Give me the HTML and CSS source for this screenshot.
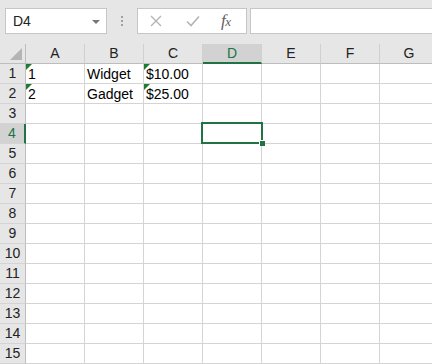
FILE: index.html
```
<!DOCTYPE html>
<html>
<head>
<meta charset="utf-8">
<link rel="stylesheet" href="styles.css">
</head>
<body>
<div class="app">
  <div class="toolbar">
    <div class="namebox">
      <span class="name">D4</span>
      <span class="caret"></span>
    </div>
    <div class="grip"><i></i><i></i><i></i></div>
    <div class="fbuttons">
      <svg class="ico cancel" width="12" height="12" viewBox="0 0 12 12"><path d="M1 1 L11 11 M11 1 L1 11" stroke="#b4b4b4" stroke-width="1.4" fill="none"/></svg>
      <svg class="ico enter" width="14" height="12" viewBox="0 0 14 12"><path d="M1 6.5 L5 10.5 L13 1.5" stroke="#b4b4b4" stroke-width="1.6" fill="none"/></svg>
      <span class="fx">f<span class="fxx">x</span></span>
    </div>
    <div class="formula"></div>
  </div>
  <div class="sheet">
    <div class="row hdr">
      <div class="rh corner"><span class="tri"></span></div>
      <div class="ch">A</div>
      <div class="ch">B</div>
      <div class="ch">C</div>
      <div class="ch active">D</div>
      <div class="ch">E</div>
      <div class="ch">F</div>
      <div class="ch">G</div>
    </div>
    <div class="row"><div class="rh">1</div><div class="c err">1</div><div class="c">Widget</div><div class="c err">$10.00</div><div class="c"></div><div class="c"></div><div class="c"></div><div class="c"></div></div>
    <div class="row"><div class="rh">2</div><div class="c err">2</div><div class="c">Gadget</div><div class="c err">$25.00</div><div class="c"></div><div class="c"></div><div class="c"></div><div class="c"></div></div>
    <div class="row"><div class="rh">3</div><div class="c"></div><div class="c"></div><div class="c"></div><div class="c"></div><div class="c"></div><div class="c"></div><div class="c"></div></div>
    <div class="row"><div class="rh active">4</div><div class="c"></div><div class="c"></div><div class="c"></div><div class="c"></div><div class="c"></div><div class="c"></div><div class="c"></div></div>
    <div class="row"><div class="rh">5</div><div class="c"></div><div class="c"></div><div class="c"></div><div class="c"></div><div class="c"></div><div class="c"></div><div class="c"></div></div>
    <div class="row"><div class="rh">6</div><div class="c"></div><div class="c"></div><div class="c"></div><div class="c"></div><div class="c"></div><div class="c"></div><div class="c"></div></div>
    <div class="row"><div class="rh">7</div><div class="c"></div><div class="c"></div><div class="c"></div><div class="c"></div><div class="c"></div><div class="c"></div><div class="c"></div></div>
    <div class="row"><div class="rh">8</div><div class="c"></div><div class="c"></div><div class="c"></div><div class="c"></div><div class="c"></div><div class="c"></div><div class="c"></div></div>
    <div class="row"><div class="rh">9</div><div class="c"></div><div class="c"></div><div class="c"></div><div class="c"></div><div class="c"></div><div class="c"></div><div class="c"></div></div>
    <div class="row"><div class="rh">10</div><div class="c"></div><div class="c"></div><div class="c"></div><div class="c"></div><div class="c"></div><div class="c"></div><div class="c"></div></div>
    <div class="row"><div class="rh">11</div><div class="c"></div><div class="c"></div><div class="c"></div><div class="c"></div><div class="c"></div><div class="c"></div><div class="c"></div></div>
    <div class="row"><div class="rh">12</div><div class="c"></div><div class="c"></div><div class="c"></div><div class="c"></div><div class="c"></div><div class="c"></div><div class="c"></div></div>
    <div class="row"><div class="rh">13</div><div class="c"></div><div class="c"></div><div class="c"></div><div class="c"></div><div class="c"></div><div class="c"></div><div class="c"></div></div>
    <div class="row"><div class="rh">14</div><div class="c"></div><div class="c"></div><div class="c"></div><div class="c"></div><div class="c"></div><div class="c"></div><div class="c"></div></div>
    <div class="row"><div class="rh">15</div><div class="c"></div><div class="c"></div><div class="c"></div><div class="c"></div><div class="c"></div><div class="c"></div><div class="c"></div></div>
    <div class="selection"><span class="handle"></span></div>
  </div>
</div>
</body>
</html>
```
FILE: styles.css
```
html, body {
  margin: 0;
  padding: 0;
  background: #ffffff;
  overflow: hidden;
}
body {
  width: 432px;
  height: 364px;
  font-family: "Liberation Sans", Arial, sans-serif;
}
.app {
  width: 432px;
  height: 364px;
  overflow: hidden;
}
.toolbar {
  height: 44px;
  background: #e6e6e6;
  display: flex;
  align-items: flex-start;
  padding-top: 8px;
  box-sizing: border-box;
  white-space: nowrap;
}
.namebox {
  margin-left: 5px;
  width: 102px;
  height: 26px;
  box-sizing: border-box;
  border: 1px solid #c6c6c6;
  background: #fff;
  display: flex;
  align-items: center;
  justify-content: space-between;
  padding: 0 6px 0 7px;
  flex: none;
}
.name {
  font-size: 14px;
  color: #222;
}
.caret {
  width: 0;
  height: 0;
  border-left: 4px solid transparent;
  border-right: 4px solid transparent;
  border-top: 4px solid #777;
  margin-top: 1px;
}
.grip {
  width: 30px;
  height: 26px;
  display: flex;
  flex-direction: column;
  align-items: center;
  justify-content: center;
  gap: 2px;
  flex: none;
}
.grip i {
  display: block;
  width: 2px;
  height: 2px;
  background: #a0a0a0;
}
.fbuttons {
  width: 110px;
  height: 26px;
  box-sizing: border-box;
  border: 1px solid #c6c6c6;
  background: #fff;
  display: flex;
  align-items: center;
  flex: none;
  position: relative;
}
.ico {
  display: block;
  flex: none;
}
.cancel { margin-left: 12px; }
.enter { margin-left: 24px; }
.fx {
  margin-left: 21px;
  font-family: "Liberation Serif", "Times New Roman", serif;
  font-style: italic;
  font-size: 17px;
  color: #5f5f5f;
  letter-spacing: -0.5px;
}
.fxx {
  font-size: 13px;
}
.formula {
  margin-left: 3px;
  flex: 1;
  height: 26px;
  box-sizing: border-box;
  border: 1px solid #c6c6c6;
  border-right: none;
  background: #fff;
}
.sheet {
  position: relative;
  width: 440px;
}
.row {
  display: flex;
  height: 20px;
}
.rh {
  width: 26px;
  flex: none;
  box-sizing: border-box;
  background: #e6e6e6;
  border-right: 1px solid #bdbdbd;
  border-bottom: 1px solid #d4d4d4;
  font-size: 14px;
  line-height: 19px;
  text-align: center;
  color: #222;
}
.rh.active {
  background: #d2d2d2;
  border-right: 2px solid #217346;
  color: #217346;
}
.hdr .rh, .ch {
  border-bottom: 1px solid #bdbdbd;
}
.corner {
  position: relative;
}
.tri {
  position: absolute;
  right: 3px;
  bottom: 3px;
  width: 0;
  height: 0;
  border-left: 12px solid transparent;
  border-bottom: 12px solid #b4b4b4;
}
.ch {
  width: 59px;
  flex: none;
  box-sizing: border-box;
  background: #e6e6e6;
  border-right: 1px solid #d0d0d0;
  font-size: 14px;
  line-height: 19px;
  text-align: center;
  color: #222;
}
.ch.active {
  background: #d2d2d2;
  border-bottom: 2px solid #217346;
  color: #217346;
}
.c {
  width: 59px;
  flex: none;
  box-sizing: border-box;
  border-right: 1px solid #d4d4d4;
  border-bottom: 1px solid #d4d4d4;
  font-size: 14px;
  line-height: 20px;
  padding-left: 2px;
  color: #000;
  position: relative;
}
.c.err::before {
  content: "";
  position: absolute;
  left: 0;
  top: 0;
  width: 0;
  height: 0;
  border-top: 6px solid #1e7b34;
  border-right: 6px solid transparent;
}
.selection {
  position: absolute;
  left: 201px;
  top: 78px;
  width: 62px;
  height: 22px;
  box-sizing: border-box;
  border: 2px solid #217346;
}
.handle {
  position: absolute;
  right: -4px;
  bottom: -4px;
  width: 5px;
  height: 5px;
  background: #217346;
  border: 1px solid #fff;
  border-right: none;
  border-bottom: none;
}
```
